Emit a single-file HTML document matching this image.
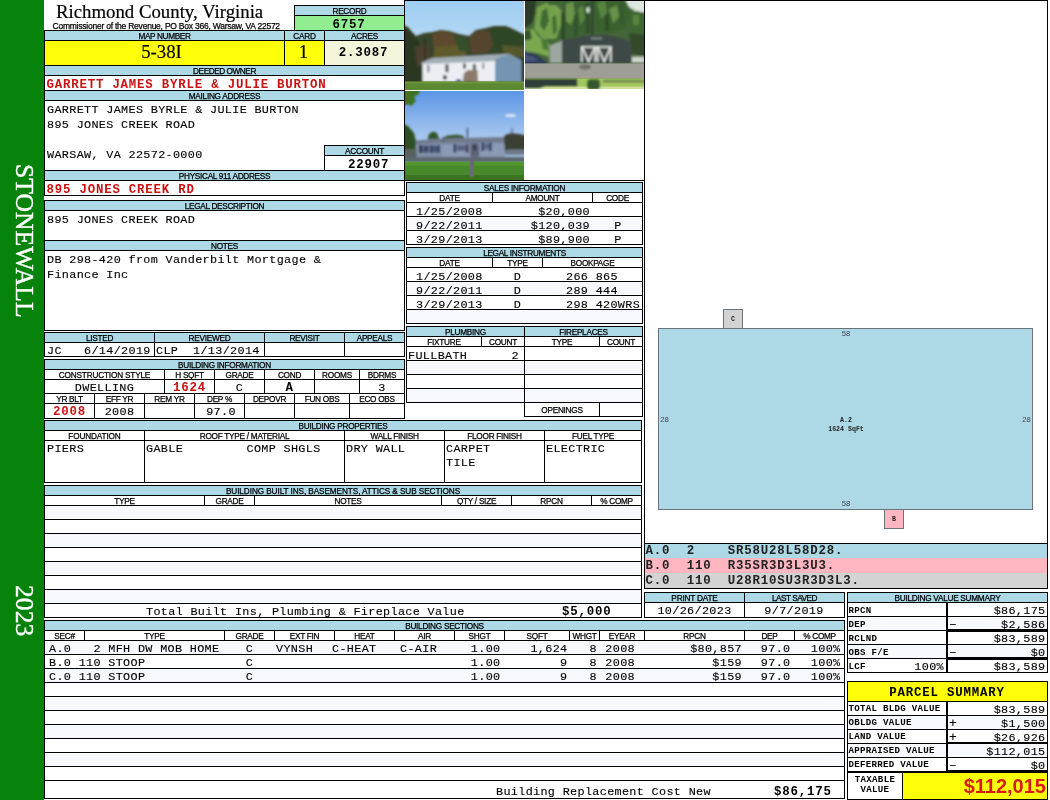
<!DOCTYPE html>
<html lang="en"><head><meta charset="utf-8"><title>Richmond County, Virginia - Property Record 6757</title>
<style>
html,body{margin:0;padding:0;background:#fff;}
#pg{position:relative;width:1050px;height:800px;overflow:hidden;background:#fff;}
.f{position:absolute;}
.r{position:absolute;box-sizing:border-box;border:1px solid #000;}
.t{position:absolute;white-space:pre;line-height:20px;color:#000;}
.m{font-family:"Liberation Mono",monospace;font-size:11.8px;letter-spacing:0.33px;color:#000;-webkit-text-stroke:0.12px #000;}
.mb{font-family:"Liberation Mono",monospace;font-size:12.4px;font-weight:bold;letter-spacing:0.8px;}
.ms{font-family:"Liberation Mono",monospace;font-size:9.1px;font-weight:bold;letter-spacing:0.3px;}
.l{font-family:"Liberation Sans",sans-serif;font-size:8.24px;letter-spacing:-0.27px;-webkit-text-stroke:0.25px #000;}
.s{font-family:"Liberation Serif",serif;font-size:18.8px;-webkit-text-stroke:0.2px #000;}
.red{color:#cc1111;}

#tx{position:absolute;left:0;top:0;width:1050px;height:800px;will-change:transform;}
.side{position:absolute;font-family:"Liberation Serif",serif;font-size:25.7px;color:#fff;-webkit-text-stroke:0.35px #fff;line-height:20px;white-space:pre;transform-origin:0 0;transform:rotate(90deg) translate(0,-20px);}
.sk{font-family:"Liberation Mono",monospace;font-size:6.6px;font-weight:bold;color:#222;}
.sd{font-family:"Liberation Sans",sans-serif;font-size:7.6px;color:#445;}
.big{font-family:"Liberation Sans",sans-serif;font-size:20px;font-weight:bold;color:#d81a1a;}
</style></head>
<body><div id="pg">
<div class="f" style="left:0px;top:0px;width:44px;height:800px;background:#07820a"></div>
<div class="r" style="left:294px;top:5px;width:111px;height:26px;"></div>
<div class="f" style="left:295px;top:6px;width:109px;height:9px;background:#add8e6"></div>
<div class="f" style="left:294px;top:15px;width:111px;height:1px;background:#000"></div>
<div class="f" style="left:295px;top:16px;width:109px;height:14px;background:#90ee90"></div>
<div class="r" style="left:44px;top:30px;width:361px;height:36px;"></div>
<div class="f" style="left:45px;top:31px;width:359px;height:9px;background:#add8e6"></div>
<div class="f" style="left:44px;top:40px;width:361px;height:1px;background:#000"></div>
<div class="f" style="left:45px;top:41px;width:279px;height:24px;background:#ffff0a"></div>
<div class="f" style="left:325px;top:41px;width:79px;height:24px;background:#f5f5dc"></div>
<div class="f" style="left:284px;top:30px;width:1px;height:36px;background:#000"></div>
<div class="f" style="left:324px;top:30px;width:1px;height:36px;background:#000"></div>
<div class="r" style="left:44px;top:65px;width:361px;height:26px;"></div>
<div class="f" style="left:45px;top:66px;width:359px;height:9px;background:#add8e6"></div>
<div class="f" style="left:44px;top:75px;width:361px;height:1px;background:#000"></div>
<div class="r" style="left:44px;top:90px;width:361px;height:81px;"></div>
<div class="f" style="left:45px;top:91px;width:359px;height:9px;background:#add8e6"></div>
<div class="f" style="left:44px;top:100px;width:361px;height:1px;background:#000"></div>
<div class="r" style="left:324px;top:145px;width:81px;height:26px;"></div>
<div class="f" style="left:325px;top:146px;width:79px;height:9px;background:#add8e6"></div>
<div class="f" style="left:324px;top:155px;width:81px;height:1px;background:#000"></div>
<div class="r" style="left:44px;top:170px;width:361px;height:26px;"></div>
<div class="f" style="left:45px;top:171px;width:359px;height:9px;background:#add8e6"></div>
<div class="f" style="left:44px;top:180px;width:361px;height:1px;background:#000"></div>
<div class="r" style="left:44px;top:200px;width:361px;height:41px;"></div>
<div class="f" style="left:45px;top:201px;width:359px;height:9px;background:#add8e6"></div>
<div class="f" style="left:44px;top:210px;width:361px;height:1px;background:#000"></div>
<div class="r" style="left:44px;top:240px;width:361px;height:91px;"></div>
<div class="f" style="left:45px;top:241px;width:359px;height:9px;background:#add8e6"></div>
<div class="f" style="left:44px;top:250px;width:361px;height:1px;background:#000"></div>
<div class="r" style="left:44px;top:332px;width:361px;height:25px;"></div>
<div class="f" style="left:45px;top:333px;width:359px;height:9px;background:#add8e6"></div>
<div class="f" style="left:44px;top:342px;width:361px;height:1px;background:#000"></div>
<div class="f" style="left:154px;top:332px;width:1px;height:25px;background:#000"></div>
<div class="f" style="left:264px;top:332px;width:1px;height:25px;background:#000"></div>
<div class="f" style="left:344px;top:332px;width:1px;height:25px;background:#000"></div>
<div class="r" style="left:44px;top:359px;width:361px;height:60px;"></div>
<div class="f" style="left:45px;top:360px;width:359px;height:9px;background:#add8e6"></div>
<div class="f" style="left:44px;top:369px;width:361px;height:1px;background:#000"></div>
<div class="f" style="left:44px;top:379px;width:361px;height:1px;background:#000"></div>
<div class="f" style="left:44px;top:393px;width:361px;height:1px;background:#000"></div>
<div class="f" style="left:44px;top:403px;width:361px;height:1px;background:#000"></div>
<div class="f" style="left:164px;top:369px;width:1px;height:25px;background:#000"></div>
<div class="f" style="left:214px;top:369px;width:1px;height:25px;background:#000"></div>
<div class="f" style="left:264px;top:369px;width:1px;height:25px;background:#000"></div>
<div class="f" style="left:314px;top:369px;width:1px;height:25px;background:#000"></div>
<div class="f" style="left:359px;top:369px;width:1px;height:25px;background:#000"></div>
<div class="f" style="left:94px;top:393px;width:1px;height:26px;background:#000"></div>
<div class="f" style="left:144px;top:393px;width:1px;height:26px;background:#000"></div>
<div class="f" style="left:194px;top:393px;width:1px;height:26px;background:#000"></div>
<div class="f" style="left:244px;top:393px;width:1px;height:26px;background:#000"></div>
<div class="f" style="left:294px;top:393px;width:1px;height:26px;background:#000"></div>
<div class="f" style="left:349px;top:393px;width:1px;height:26px;background:#000"></div>
<div class="r" style="left:44px;top:420px;width:598px;height:63px;"></div>
<div class="f" style="left:45px;top:421px;width:596px;height:9px;background:#add8e6"></div>
<div class="f" style="left:44px;top:430px;width:598px;height:1px;background:#000"></div>
<div class="f" style="left:44px;top:440px;width:598px;height:1px;background:#000"></div>
<div class="f" style="left:144px;top:430px;width:1px;height:53px;background:#000"></div>
<div class="f" style="left:344px;top:430px;width:1px;height:53px;background:#000"></div>
<div class="f" style="left:444px;top:430px;width:1px;height:53px;background:#000"></div>
<div class="f" style="left:544px;top:430px;width:1px;height:53px;background:#000"></div>
<div class="r" style="left:44px;top:485px;width:598px;height:133px;"></div>
<div class="f" style="left:45px;top:486px;width:596px;height:9px;background:#add8e6"></div>
<div class="f" style="left:44px;top:495px;width:598px;height:1px;background:#000"></div>
<div class="f" style="left:44px;top:505px;width:598px;height:1px;background:#000"></div>
<div class="f" style="left:204px;top:495px;width:1px;height:11px;background:#000"></div>
<div class="f" style="left:254px;top:495px;width:1px;height:11px;background:#000"></div>
<div class="f" style="left:441px;top:495px;width:1px;height:11px;background:#000"></div>
<div class="f" style="left:511px;top:495px;width:1px;height:11px;background:#000"></div>
<div class="f" style="left:591px;top:495px;width:1px;height:11px;background:#000"></div>
<div class="f" style="left:45px;top:506px;width:596px;height:13px;background:#f8f8ff"></div>
<div class="f" style="left:44px;top:519px;width:598px;height:1px;background:#000"></div>
<div class="f" style="left:44px;top:533px;width:598px;height:1px;background:#000"></div>
<div class="f" style="left:45px;top:534px;width:596px;height:13px;background:#f8f8ff"></div>
<div class="f" style="left:44px;top:547px;width:598px;height:1px;background:#000"></div>
<div class="f" style="left:44px;top:561px;width:598px;height:1px;background:#000"></div>
<div class="f" style="left:45px;top:562px;width:596px;height:13px;background:#f8f8ff"></div>
<div class="f" style="left:44px;top:575px;width:598px;height:1px;background:#000"></div>
<div class="f" style="left:44px;top:589px;width:598px;height:1px;background:#000"></div>
<div class="f" style="left:45px;top:590px;width:596px;height:13px;background:#f8f8ff"></div>
<div class="f" style="left:44px;top:603px;width:598px;height:1px;background:#000"></div>
<div class="r" style="left:44px;top:620px;width:801px;height:179px;"></div>
<div class="f" style="left:45px;top:621px;width:799px;height:9px;background:#add8e6"></div>
<div class="f" style="left:44px;top:630px;width:801px;height:1px;background:#000"></div>
<div class="f" style="left:44px;top:640px;width:801px;height:1px;background:#000"></div>
<div class="f" style="left:84px;top:630px;width:1px;height:11px;background:#000"></div>
<div class="f" style="left:224px;top:630px;width:1px;height:11px;background:#000"></div>
<div class="f" style="left:274px;top:630px;width:1px;height:11px;background:#000"></div>
<div class="f" style="left:334px;top:630px;width:1px;height:11px;background:#000"></div>
<div class="f" style="left:394px;top:630px;width:1px;height:11px;background:#000"></div>
<div class="f" style="left:454px;top:630px;width:1px;height:11px;background:#000"></div>
<div class="f" style="left:504px;top:630px;width:1px;height:11px;background:#000"></div>
<div class="f" style="left:569px;top:630px;width:1px;height:11px;background:#000"></div>
<div class="f" style="left:599px;top:630px;width:1px;height:11px;background:#000"></div>
<div class="f" style="left:644px;top:630px;width:1px;height:11px;background:#000"></div>
<div class="f" style="left:744px;top:630px;width:1px;height:11px;background:#000"></div>
<div class="f" style="left:794px;top:630px;width:1px;height:11px;background:#000"></div>
<div class="f" style="left:45px;top:641px;width:799px;height:13px;background:#f8f8ff"></div>
<div class="f" style="left:44px;top:654px;width:801px;height:1px;background:#000"></div>
<div class="f" style="left:44px;top:668px;width:801px;height:1px;background:#000"></div>
<div class="f" style="left:45px;top:669px;width:799px;height:13px;background:#f8f8ff"></div>
<div class="f" style="left:44px;top:682px;width:801px;height:1px;background:#000"></div>
<div class="f" style="left:44px;top:696px;width:801px;height:1px;background:#000"></div>
<div class="f" style="left:45px;top:697px;width:799px;height:13px;background:#f8f8ff"></div>
<div class="f" style="left:44px;top:710px;width:801px;height:1px;background:#000"></div>
<div class="f" style="left:44px;top:724px;width:801px;height:1px;background:#000"></div>
<div class="f" style="left:45px;top:725px;width:799px;height:13px;background:#f8f8ff"></div>
<div class="f" style="left:44px;top:738px;width:801px;height:1px;background:#000"></div>
<div class="f" style="left:44px;top:752px;width:801px;height:1px;background:#000"></div>
<div class="f" style="left:45px;top:753px;width:799px;height:13px;background:#f8f8ff"></div>
<div class="f" style="left:44px;top:766px;width:801px;height:1px;background:#000"></div>
<div class="f" style="left:44px;top:780px;width:801px;height:1px;background:#000"></div>
<div class="f" style="left:404px;top:0px;width:644px;height:1px;background:#000"></div>
<div class="f" style="left:404px;top:0px;width:1px;height:181px;background:#000"></div>
<div class="f" style="left:404px;top:180px;width:241px;height:1px;background:#000"></div>
<div class="f" style="left:644px;top:0px;width:1px;height:589px;background:#000"></div>
<div class="f" style="left:1047px;top:0px;width:1px;height:589px;background:#000"></div>

<svg class="f" style="left:405px;top:1px" width="119" height="89" viewBox="0 0 119 89">
<defs><linearGradient id="sk1" x1="0" y1="0" x2="0" y2="1"><stop offset="0" stop-color="#9fcdf1"/><stop offset="1" stop-color="#cde5f6"/></linearGradient>
<filter id="b1" x="-5%" y="-5%" width="110%" height="110%"><feGaussianBlur stdDeviation="0.9"/></filter></defs>
<rect width="119" height="89" fill="url(#sk1)"/>
<g filter="url(#b1)">
<path d="M-2 24 L3 26 L7 31 L11 35 L19 32 L28 31 L36 29 L44 30 L54 33 L64 35 L71 29 L81 27 L89 25 L101 25 L108 28 L114 31 L121 34 L121 84 L-2 84 Z" fill="#38452a"/>
<path d="M-2 26 L4 28 L10 36 L16 44 L18 82 L-2 82 Z" fill="#2b3823"/>
<path d="M10 46 L22 42 L26 60 L12 66 Z" fill="#4c4030"/>
<path d="M27 34 L37 30 L48 33 L52 44 L46 52 L30 52 Z" fill="#5e4a2e"/>
<path d="M30 46 L52 44 L62 52 L60 58 L28 58 Z" fill="#5e5a2c"/>
<path d="M50 34 L62 37 L64 50 L54 50 Z" fill="#35502a"/>
<path d="M64 36 L72 30 L84 30 L88 44 L82 52 L66 52 Z" fill="#54452d"/>
<path d="M86 27 L100 26 L112 31 L119 36 L119 52 L90 50 Z" fill="#2f4526"/>
<path d="M96 44 L119 46 L119 56 L100 54 Z" fill="#55592b"/>
<rect x="19.4" y="38" width="1.4" height="43" fill="#2a2a26"/>
<path d="M16.5 61.5 L27 57 L103.7 52.8 L116.7 59.4 L90 58.4 L90 60.5 L16.5 63.5 Z" fill="#a2adb5"/>
<path d="M17.5 63 L90 60 L90 81 L17.5 81 Z" fill="#eceef3"/>
<path d="M90 58.2 L103.7 53.2 L116.7 59.4 L116.7 81 L90 81 Z" fill="#7494b2"/>
<rect x="116.7" y="58" width="2.3" height="22" fill="#2c3626"/>
<rect x="22" y="64" width="2.6" height="7.2" fill="#8a909c"/><rect x="40" y="63.2" width="3.8" height="8" fill="#6a6f7a"/>
<rect x="58" y="62.6" width="3" height="5" fill="#55585c"/><rect x="67.8" y="63" width="3.2" height="6.4" fill="#5c5a58"/><rect x="77.6" y="62" width="1.5" height="5.6" fill="#55585c"/>
<path d="M57.5 81 L59 72 L63 69 L72.5 69 L73 81 Z" fill="#8b7a69"/>
<rect x="38" y="74.4" width="3.8" height="4" fill="#444a4c"/><rect x="51" y="78.4" width="5" height="2.4" fill="#2c4aa0"/>
</g>
<rect x="0" y="80.6" width="119" height="8.4" fill="#5c8831"/><rect x="0" y="80.6" width="119" height="2" fill="#6c9439"/>
</svg>
<svg class="f" style="left:525px;top:1px" width="119" height="88" viewBox="0 0 119 88">
<defs><filter id="b2" x="-5%" y="-5%" width="110%" height="110%"><feGaussianBlur stdDeviation="1.1"/></filter></defs>
<rect width="119" height="88" fill="#44663a"/>
<g filter="url(#b2)">
<path d="M-2 -2 H11 L10 12 L7 22 L-2 28 Z" fill="#2a3a28"/>
<path d="M12 6 L20 2 L30 3 L37 10 L36 24 L31 38 L18 38 L9 28 Z" fill="#74a04c"/>
<path d="M17 10 L22 7 L24 20 L19 30 L15 24 Z" fill="#3f6a30"/>
<path d="M27 16 L31 14 L32 30 L28 34 Z" fill="#426e31"/>
<path d="M22 -2 H36 L34 4 L24 4 Z" fill="#3c6230"/>
<path d="M37 -2 H66 L66 34 L52 36 L38 40 L36 24 Z" fill="#3c6034"/>
<path d="M41 3 L48 1 L50 14 L46 24 L41 20 Z" fill="#6a9448"/>
<path d="M53 8 L58 4 L60 18 L55 24 Z" fill="#588440"/>
<path d="M36 12 L40 12 L40 38 L36 40 Z" fill="#2f4c2a"/>
<path d="M49 14 L53 12 L53 34 L49 36 Z" fill="#33522c"/>
<path d="M60 2 L65 2 L65 32 L61 32 Z" fill="#31502c"/>
<rect x="66.4" y="-2" width="2" height="36" fill="#2c382e"/>
<path d="M69 -2 H104 L106 12 L100 28 L86 32 L70 32 Z" fill="#3a622e"/>
<path d="M72 2 L80 0 L82 12 L76 18 Z" fill="#588440"/>
<path d="M84 8 L92 4 L94 16 L88 22 Z" fill="#66924a"/>
<path d="M80 14 L84 12 L84 30 L80 30 Z" fill="#2f4e2a"/>
<path d="M94 2 L99 0 L99 22 L95 24 Z" fill="#365a2e"/>
<path d="M100 -2 H121 V12 L110 10 L104 6 Z" fill="#dde7de"/><ellipse cx="63" cy="9" rx="1.8" ry="3" fill="#cfdccf"/>
<path d="M104 9 L121 12 V34 L106 30 Z" fill="#3c6630"/>
<path d="M108 14 L114 14 L114 24 L108 24 Z" fill="#588440"/>
<path d="M104 32 L121 34 V56 L106 52 Z" fill="#304a2c"/>
<path d="M-2 28 L8 28 L14 36 L24 42 L24 56 L12 52 L-2 50 Z" fill="#7aa850"/>
<path d="M-2 30 L5 28 L7 38 L-2 40 Z" fill="#35562c"/>
<path d="M16 38 L22 38 L24 50 L18 48 Z" fill="#4a7a36"/>
<path d="M36.9 39.6 L59.2 34.7 L81.5 33.4 L101.3 38.4 L106.8 44.6 L106.8 62 L36.9 62 Z" fill="#3e4846"/>
<path d="M24.5 44.6 L36.9 39.6 L36.9 62 L24.5 62 Z" fill="#9da6a0"/>
<g fill="none" stroke="#f2f4f0" stroke-width="1.5"><path d="M56 46 H86.6"/><path d="M56.8 46 V61"/><path d="M85.8 46 V61"/><path d="M70.2 46 V61"/><path d="M72.6 46 V61"/><path d="M57.4 46.5 L63.6 60.6 L69.8 46.5"/><path d="M73 46.5 L79.2 60.6 L85.4 46.5"/></g>
<rect x="66" y="36.6" width="11" height="1.6" fill="#8a9490"/>
<rect x="106.8" y="55.7" width="13" height="6" fill="#cfd4cf"/>
<path d="M-2 50.4 L10 52.6 L21 60.4 L22 63 L-2 63 Z" fill="#2f3a58"/>
<path d="M-2 53 L8 55.4 L14 60 L-2 60 Z" fill="#4a5878"/>
</g>
<rect x="0" y="62.4" width="119" height="15.2" fill="#9e9e96"/>
<rect x="0" y="77.4" width="119" height="10.6" fill="#a2c660"/><rect x="0" y="85.6" width="119" height="2.4" fill="#cfe0a0"/>
<g filter="url(#b2)">
<ellipse cx="60" cy="66" rx="6" ry="2.4" fill="#6e6e68"/>
<path d="M-2 78 H52 V85 H20 L14 87 H-2 Z" fill="#2e3e37"/>
<rect x="62.3" y="78.4" width="12.4" height="10" rx="3" fill="#35552c"/>
<rect x="78" y="79.4" width="42" height="1.6" fill="#5c6a4a"/>
</g>
</svg>
<svg class="f" style="left:405px;top:91px" width="119" height="89" viewBox="0 0 119 89">
<defs><linearGradient id="sk3" x1="0" y1="0" x2="0" y2="1"><stop offset="0" stop-color="#5c96e6"/><stop offset="0.52" stop-color="#a7c7ef"/><stop offset="1" stop-color="#a7c7ef"/></linearGradient>
<filter id="b3" x="-5%" y="-5%" width="110%" height="110%"><feGaussianBlur stdDeviation="0.8"/></filter></defs>
<rect width="119" height="89" fill="url(#sk3)"/>
<g filter="url(#b3)">
<path d="M-2 -2 H15 L14 3 L9 6 L11 10 L6 15 L2 13 L-2 16 Z" fill="#3f7022"/>
<path d="M-2 33 L3 35 L9 42 L11 50 L11 61 L-2 62 Z" fill="#2e5020"/>
<path d="M22.5 48.5 L24 43 L28 40.5 L32 42 L34.5 48.5 Z" fill="#34542c"/>
<path d="M38 47 L42 44.5 L52 43.6 L59 45 L59 48.5 L38 48.5 Z" fill="#3a5a30"/>
<ellipse cx="105.5" cy="24.5" rx="5.5" ry="1.6" fill="#dfeaf8"/>
<rect x="61.8" y="36.8" width="1.3" height="10" fill="#3c4860"/><rect x="106.6" y="37.4" width="1" height="7" fill="#3c4860"/>
<path d="M10.9 49.5 L36 47.5 L98.8 46 L100 52.4 L10.9 53.6 Z" fill="#6f7a8e"/>
<path d="M10.9 53 L100 52 L100 66.4 L10.9 66.4 Z" fill="#8c9ab6"/>
<path d="M10.9 53 L37 52.6 L37 66.4 L10.9 66.4 Z" fill="#8290aa"/>
<rect x="37.5" y="45.5" width="2" height="6" fill="#5c6678"/>
<rect x="14" y="54" width="3.4" height="8" fill="#28324e"/><rect x="18.4" y="54.6" width="5.5" height="7" fill="#3c4868"/>
<rect x="25" y="54" width="2.6" height="8" fill="#28324e"/><rect x="28.2" y="54.6" width="4" height="7" fill="#46527a"/><rect x="32.6" y="54" width="2.2" height="8" fill="#28324e"/>
<rect x="48.6" y="53" width="2.4" height="8.6" fill="#28324e"/><rect x="51.6" y="54" width="8.6" height="6" fill="#56627e"/><rect x="60.8" y="53" width="2.6" height="8.6" fill="#28324e"/>
<rect x="65.4" y="52.6" width="8.8" height="13" fill="#5a6274"/><rect x="68" y="53.4" width="3" height="6" fill="#2f3850"/>
<rect x="76.5" y="51.8" width="2.4" height="8.4" fill="#28324e"/><rect x="79.4" y="52.6" width="4.6" height="6" fill="#5a6684"/><rect x="84.4" y="51.8" width="2.2" height="8.4" fill="#28324e"/>
<path d="M98.8 46 L101 43.5 L106 42.3 L114 43 L121 44.5 L121 61 L100 61 Z" fill="#3a4034"/>
<path d="M100 60 L104 58.6 L121 58.4 L121 64 L100 64 Z" fill="#707b8b"/>
<rect x="-2" y="58" width="13.5" height="9" fill="#56615c"/><rect x="-2" y="65.9" width="123" height="5.4" fill="#5c686e"/>
</g>
<rect x="0" y="70.8" width="119" height="18.2" fill="#47882a"/><rect x="0" y="70.8" width="119" height="4" fill="#52962e"/><rect x="0" y="84" width="119" height="5" fill="#3a7420"/>
<rect x="64.7" y="68.3" width="4.3" height="17.4" fill="#6a6680"/>
</svg>

<div class="r" style="left:406px;top:182px;width:237px;height:63px;"></div>
<div class="f" style="left:407px;top:183px;width:235px;height:9px;background:#add8e6"></div>
<div class="f" style="left:406px;top:192px;width:237px;height:1px;background:#000"></div>
<div class="f" style="left:406px;top:202px;width:237px;height:1px;background:#000"></div>
<div class="f" style="left:492px;top:192px;width:1px;height:11px;background:#000"></div>
<div class="f" style="left:592px;top:192px;width:1px;height:11px;background:#000"></div>
<div class="f" style="left:406px;top:216px;width:237px;height:1px;background:#000"></div>
<div class="f" style="left:406px;top:230px;width:237px;height:1px;background:#000"></div>
<div class="f" style="left:407px;top:217px;width:235px;height:13px;background:#f8f8ff"></div>
<div class="r" style="left:406px;top:247px;width:237px;height:77px;"></div>
<div class="f" style="left:407px;top:248px;width:235px;height:9px;background:#add8e6"></div>
<div class="f" style="left:406px;top:257px;width:237px;height:1px;background:#000"></div>
<div class="f" style="left:406px;top:267px;width:237px;height:1px;background:#000"></div>
<div class="f" style="left:492px;top:257px;width:1px;height:11px;background:#000"></div>
<div class="f" style="left:542px;top:257px;width:1px;height:11px;background:#000"></div>
<div class="f" style="left:406px;top:281px;width:237px;height:1px;background:#000"></div>
<div class="f" style="left:406px;top:295px;width:237px;height:1px;background:#000"></div>
<div class="f" style="left:406px;top:309px;width:237px;height:1px;background:#000"></div>
<div class="f" style="left:407px;top:282px;width:235px;height:13px;background:#f8f8ff"></div>
<div class="f" style="left:407px;top:310px;width:235px;height:13px;background:#f8f8ff"></div>
<div class="r" style="left:406px;top:326px;width:119px;height:77px;"></div>
<div class="r" style="left:524px;top:326px;width:119px;height:91px;"></div>
<div class="f" style="left:407px;top:327px;width:117px;height:9px;background:#add8e6"></div>
<div class="f" style="left:525px;top:327px;width:117px;height:9px;background:#add8e6"></div>
<div class="f" style="left:406px;top:336px;width:237px;height:1px;background:#000"></div>
<div class="f" style="left:406px;top:346px;width:237px;height:1px;background:#000"></div>
<div class="f" style="left:481px;top:336px;width:1px;height:11px;background:#000"></div>
<div class="f" style="left:599px;top:336px;width:1px;height:11px;background:#000"></div>
<div class="f" style="left:406px;top:360px;width:237px;height:1px;background:#000"></div>
<div class="f" style="left:406px;top:374px;width:237px;height:1px;background:#000"></div>
<div class="f" style="left:406px;top:388px;width:237px;height:1px;background:#000"></div>
<div class="f" style="left:524px;top:402px;width:119px;height:1px;background:#000"></div>
<div class="f" style="left:407px;top:361px;width:117px;height:13px;background:#f8f8ff"></div>
<div class="f" style="left:525px;top:361px;width:117px;height:13px;background:#f8f8ff"></div>
<div class="f" style="left:407px;top:389px;width:117px;height:13px;background:#f8f8ff"></div>
<div class="f" style="left:525px;top:389px;width:117px;height:13px;background:#f8f8ff"></div>
<div class="f" style="left:599px;top:402px;width:1px;height:15px;background:#000"></div>
<div class="r" style="left:658px;top:328px;width:375px;height:182px;background:#add8e6;border-color:#6a747c;"></div>
<div class="r" style="left:723px;top:309px;width:20px;height:20px;background:#d3d3d3;border-color:#6a747c;"></div>
<div class="r" style="left:884px;top:509px;width:20px;height:20px;background:#ffb6c1;border-color:#6a747c;"></div>
<div class="f" style="left:644px;top:543px;width:404px;height:1px;background:#000"></div>
<div class="f" style="left:644px;top:588px;width:404px;height:1px;background:#000"></div>
<div class="f" style="left:645px;top:544px;width:402px;height:14px;background:#add8e6"></div>
<div class="f" style="left:645px;top:558px;width:402px;height:15px;background:#ffb6c1"></div>
<div class="f" style="left:645px;top:573px;width:402px;height:15px;background:#d3d3d3"></div>
<div class="r" style="left:644px;top:592px;width:201px;height:26px;"></div>
<div class="f" style="left:645px;top:593px;width:199px;height:9px;background:#add8e6"></div>
<div class="f" style="left:644px;top:602px;width:201px;height:1px;background:#000"></div>
<div class="f" style="left:744px;top:592px;width:1px;height:26px;background:#000"></div>
<div class="r" style="left:847px;top:592px;width:201px;height:81px;"></div>
<div class="f" style="left:848px;top:593px;width:199px;height:9px;background:#add8e6"></div>
<div class="f" style="left:847px;top:602px;width:201px;height:1px;background:#000"></div>
<div class="f" style="left:946px;top:602px;width:2px;height:71px;background:#000"></div>
<div class="f" style="left:847px;top:616px;width:100px;height:1px;background:#000"></div>
<div class="f" style="left:947px;top:616px;width:101px;height:1px;background:#000"></div>
<div class="f" style="left:848px;top:617px;width:98px;height:13px;background:#f8f8ff"></div>
<div class="f" style="left:948px;top:617px;width:99px;height:13px;background:#f8f8ff"></div>
<div class="f" style="left:847px;top:630px;width:100px;height:1px;background:#000"></div>
<div class="f" style="left:947px;top:629px;width:101px;height:3px;background:#000"></div>
<div class="f" style="left:847px;top:644px;width:100px;height:1px;background:#000"></div>
<div class="f" style="left:947px;top:644px;width:101px;height:1px;background:#000"></div>
<div class="f" style="left:848px;top:645px;width:98px;height:13px;background:#f8f8ff"></div>
<div class="f" style="left:948px;top:645px;width:99px;height:13px;background:#f8f8ff"></div>
<div class="f" style="left:847px;top:658px;width:100px;height:1px;background:#000"></div>
<div class="f" style="left:947px;top:657px;width:101px;height:3px;background:#000"></div>
<div class="r" style="left:847px;top:681px;width:201px;height:119px;"></div>
<div class="f" style="left:848px;top:682px;width:199px;height:19px;background:#ffff0a"></div>
<div class="f" style="left:847px;top:701px;width:201px;height:1px;background:#000"></div>
<div class="f" style="left:946px;top:701px;width:2px;height:72px;background:#000"></div>
<div class="f" style="left:847px;top:715px;width:100px;height:1px;background:#000"></div>
<div class="f" style="left:947px;top:715px;width:101px;height:1px;background:#000"></div>
<div class="f" style="left:848px;top:716px;width:98px;height:13px;background:#f8f8ff"></div>
<div class="f" style="left:948px;top:716px;width:99px;height:13px;background:#f8f8ff"></div>
<div class="f" style="left:847px;top:729px;width:100px;height:1px;background:#000"></div>
<div class="f" style="left:947px;top:729px;width:101px;height:1px;background:#000"></div>
<div class="f" style="left:847px;top:743px;width:100px;height:1px;background:#000"></div>
<div class="f" style="left:947px;top:742px;width:101px;height:3px;background:#000"></div>
<div class="f" style="left:848px;top:744px;width:98px;height:13px;background:#f8f8ff"></div>
<div class="f" style="left:948px;top:744px;width:99px;height:13px;background:#f8f8ff"></div>
<div class="f" style="left:848px;top:744px;width:98px;height:13px;background:#f8f8ff"></div>
<div class="f" style="left:948px;top:744px;width:99px;height:13px;background:#f8f8ff"></div>
<div class="f" style="left:847px;top:757px;width:100px;height:1px;background:#000"></div>
<div class="f" style="left:947px;top:757px;width:101px;height:1px;background:#000"></div>
<div class="f" style="left:847px;top:771px;width:100px;height:1px;background:#000"></div>
<div class="f" style="left:947px;top:770px;width:101px;height:3px;background:#000"></div>
<div class="f" style="left:847px;top:772px;width:201px;height:1px;background:#000"></div>
<div class="f" style="left:903px;top:773px;width:144px;height:26px;background:#ffff0a"></div>
<div class="f" style="left:902px;top:772px;width:1px;height:28px;background:#000"></div>
<div id="tx">
<div class="side" style="left:13.8px;top:164px;">STONEWALL</div>
<div class="side" style="left:13.8px;top:585px;">2023</div>
<div class="t s" style="left:56px;top:2px;">Richmond County, Virginia</div>
<div class="t l" style="left:52.5px;top:16px;letter-spacing:-0.23px;font-size:8.5px;">Commissioner of the Revenue, PO Box 366, Warsaw, VA 22572</div>
<div class="t l" style="left:149.5px;top:2px;width:400px;text-align:center;">RECORD</div>
<div class="t mb" style="left:149px;top:15px;width:400px;text-align:center;">6757</div>
<div class="t l" style="left:-35.5px;top:27px;width:400px;text-align:center;letter-spacing:-0.36px;">MAP NUMBER</div>
<div class="t l" style="left:104.5px;top:27px;width:400px;text-align:center;">CARD</div>
<div class="t l" style="left:164.5px;top:27px;width:400px;text-align:center;">ACRES</div>
<div class="t s" style="left:-38.5px;top:42px;width:400px;text-align:center;">5-38I</div>
<div class="t s" style="left:103.5px;top:42px;width:400px;text-align:center;">1</div>
<div class="t mb" style="left:163.5px;top:43px;width:400px;text-align:center;">2.3087</div>
<div class="t l" style="left:24.5px;top:62px;width:400px;text-align:center;letter-spacing:-0.45px;">DEEDED OWNER</div>
<div class="t mb red" style="left:46.5px;top:75px;">GARRETT JAMES BYRLE &amp; JULIE BURTON</div>
<div class="t l" style="left:24.5px;top:87px;width:400px;text-align:center;">MAILING ADDRESS</div>
<div class="t m" style="left:47px;top:100px;">GARRETT JAMES BYRLE &amp; JULIE BURTON</div>
<div class="t m" style="left:47px;top:115px;">895 JONES CREEK ROAD</div>
<div class="t m" style="left:47px;top:145px;">WARSAW, VA 22572-0000</div>
<div class="t l" style="left:164.5px;top:142px;width:400px;text-align:center;">ACCOUNT</div>
<div class="t mb" style="left:164.5px;top:155px;width:400px;text-align:center;"> 22907</div>
<div class="t l" style="left:24.5px;top:167px;width:400px;text-align:center;letter-spacing:-0.31px;">PHYSICAL 911 ADDRESS</div>
<div class="t mb red" style="left:46.5px;top:180px;">895 JONES CREEK RD</div>
<div class="t l" style="left:24.5px;top:197px;width:400px;text-align:center;letter-spacing:-0.32px;">LEGAL DESCRIPTION</div>
<div class="t m" style="left:47px;top:210px;">895 JONES CREEK ROAD</div>
<div class="t l" style="left:24.5px;top:237px;width:400px;text-align:center;">NOTES</div>
<div class="t m" style="left:47px;top:250px;">DB 298-420 from Vanderbilt Mortgage &amp;</div>
<div class="t m" style="left:47px;top:265px;">Finance Inc</div>
<div class="t l" style="left:-100.5px;top:329px;width:400px;text-align:center;">LISTED</div>
<div class="t l" style="left:9.5px;top:329px;width:400px;text-align:center;">REVIEWED</div>
<div class="t l" style="left:104.5px;top:329px;width:400px;text-align:center;">REVISIT</div>
<div class="t l" style="left:174.5px;top:329px;width:400px;text-align:center;">APPEALS</div>
<div class="t m" style="left:47px;top:341px;">JC   6/14/2019</div>
<div class="t m" style="left:156px;top:341px;">CLP  1/13/2014</div>
<div class="t l" style="left:24.5px;top:356px;width:400px;text-align:center;">BUILDING INFORMATION</div>
<div class="t l" style="left:-95.5px;top:366px;width:400px;text-align:center;letter-spacing:-0.19px;">CONSTRUCTION STYLE</div>
<div class="t l" style="left:-10.5px;top:366px;width:400px;text-align:center;">H SQFT</div>
<div class="t l" style="left:39.5px;top:366px;width:400px;text-align:center;">GRADE</div>
<div class="t l" style="left:89.5px;top:366px;width:400px;text-align:center;">COND</div>
<div class="t l" style="left:137px;top:366px;width:400px;text-align:center;">ROOMS</div>
<div class="t l" style="left:182px;top:366px;width:400px;text-align:center;">BDRMS</div>
<div class="t m" style="left:-95.5px;top:378px;width:400px;text-align:center;">DWELLING</div>
<div class="t mb red" style="left:-10.5px;top:378px;width:400px;text-align:center;">1624</div>
<div class="t m" style="left:39.5px;top:378px;width:400px;text-align:center;">C</div>
<div class="t mb" style="left:89.5px;top:378px;width:400px;text-align:center;">A</div>
<div class="t m" style="left:182px;top:378px;width:400px;text-align:center;">3</div>
<div class="t l" style="left:-130.5px;top:390px;width:400px;text-align:center;">YR BLT</div>
<div class="t l" style="left:-80.5px;top:390px;width:400px;text-align:center;">EFF YR</div>
<div class="t l" style="left:-30.5px;top:390px;width:400px;text-align:center;">REM YR</div>
<div class="t l" style="left:19.5px;top:390px;width:400px;text-align:center;">DEP %</div>
<div class="t l" style="left:69.5px;top:390px;width:400px;text-align:center;">DEPOVR</div>
<div class="t l" style="left:122px;top:390px;width:400px;text-align:center;">FUN OBS</div>
<div class="t l" style="left:177px;top:390px;width:400px;text-align:center;">ECO OBS</div>
<div class="t mb red" style="left:-130.5px;top:402px;width:400px;text-align:center;">2008</div>
<div class="t m" style="left:-80.5px;top:402px;width:400px;text-align:center;">2008</div>
<div class="t m" style="left:21px;top:402px;width:400px;text-align:center;">97.0</div>
<div class="t l" style="left:143px;top:417px;width:400px;text-align:center;">BUILDING PROPERTIES</div>
<div class="t l" style="left:-105.5px;top:427px;width:400px;text-align:center;letter-spacing:-0.15px;">FOUNDATION</div>
<div class="t l" style="left:44.5px;top:427px;width:400px;text-align:center;">ROOF TYPE / MATERIAL</div>
<div class="t l" style="left:194.5px;top:427px;width:400px;text-align:center;">WALL FINISH</div>
<div class="t l" style="left:294.5px;top:427px;width:400px;text-align:center;">FLOOR FINISH</div>
<div class="t l" style="left:393px;top:427px;width:400px;text-align:center;">FUEL TYPE</div>
<div class="t m" style="left:47px;top:439px;">PIERS</div>
<div class="t m" style="left:146px;top:439px;">GABLE</div>
<div class="t m" style="left:246.5px;top:439px;">COMP SHGLS</div>
<div class="t m" style="left:346px;top:439px;">DRY WALL</div>
<div class="t m" style="left:446px;top:439px;">CARPET</div>
<div class="t m" style="left:446px;top:453px;">TILE</div>
<div class="t m" style="left:546px;top:439px;">ELECTRIC</div>
<div class="t l" style="left:143px;top:482px;width:400px;text-align:center;letter-spacing:-0.1px;">BUILDING BUILT INS, BASEMENTS, ATTICS &amp; SUB SECTIONS</div>
<div class="t l" style="left:-75.5px;top:492px;width:400px;text-align:center;">TYPE</div>
<div class="t l" style="left:29.5px;top:492px;width:400px;text-align:center;">GRADE</div>
<div class="t l" style="left:148px;top:492px;width:400px;text-align:center;">NOTES</div>
<div class="t l" style="left:276.5px;top:492px;width:400px;text-align:center;">QTY / SIZE</div>
<div class="t l" style="left:351.5px;top:492px;width:400px;text-align:center;">RPCN</div>
<div class="t l" style="left:416.5px;top:492px;width:400px;text-align:center;">% COMP</div>
<div class="t m" style="left:146px;top:602px;">Total Built Ins, Plumbing &amp; Fireplace Value</div>
<div class="t mb" style="left:562px;top:602px;">$5,000</div>
<div class="t l" style="left:244.5px;top:617px;width:400px;text-align:center;">BUILDING SECTIONS</div>
<div class="t l" style="left:-135.5px;top:627px;width:400px;text-align:center;">SEC#</div>
<div class="t l" style="left:-45.5px;top:627px;width:400px;text-align:center;">TYPE</div>
<div class="t l" style="left:49.5px;top:627px;width:400px;text-align:center;">GRADE</div>
<div class="t l" style="left:104.5px;top:627px;width:400px;text-align:center;">EXT FIN</div>
<div class="t l" style="left:164.5px;top:627px;width:400px;text-align:center;">HEAT</div>
<div class="t l" style="left:224.5px;top:627px;width:400px;text-align:center;">AIR</div>
<div class="t l" style="left:279.5px;top:627px;width:400px;text-align:center;">SHGT</div>
<div class="t l" style="left:337px;top:627px;width:400px;text-align:center;">SQFT</div>
<div class="t l" style="left:384.5px;top:627px;width:400px;text-align:center;">WHGT</div>
<div class="t l" style="left:422px;top:627px;width:400px;text-align:center;">EYEAR</div>
<div class="t l" style="left:494.5px;top:627px;width:400px;text-align:center;">RPCN</div>
<div class="t l" style="left:569.5px;top:627px;width:400px;text-align:center;">DEP</div>
<div class="t l" style="left:619.5px;top:627px;width:400px;text-align:center;">% COMP</div>
<div class="t m" style="left:49px;top:639px;">A.0   2 MFH DW MOB HOME</div>
<div class="t m" style="left:49.5px;top:639px;width:400px;text-align:center;">C</div>
<div class="t m" style="left:276px;top:639px;">VYNSH</div>
<div class="t m" style="left:332px;top:639px;">C-HEAT</div>
<div class="t m" style="left:400px;top:639px;">C-AIR</div>
<div class="t m" style="left:100.5px;top:639px;width:400px;text-align:right;">1.00</div>
<div class="t m" style="left:167.5px;top:639px;width:400px;text-align:right;">1,624</div>
<div class="t m" style="left:197px;top:639px;width:400px;text-align:right;">8</div>
<div class="t m" style="left:235px;top:639px;width:400px;text-align:right;">2008</div>
<div class="t m" style="left:342px;top:639px;width:400px;text-align:right;">$80,857</div>
<div class="t m" style="left:390.5px;top:639px;width:400px;text-align:right;">97.0</div>
<div class="t m" style="left:440.5px;top:639px;width:400px;text-align:right;">100%</div>
<div class="t m" style="left:49px;top:653px;">B.0 110 STOOP</div>
<div class="t m" style="left:49.5px;top:653px;width:400px;text-align:center;">C</div>
<div class="t m" style="left:100.5px;top:653px;width:400px;text-align:right;">1.00</div>
<div class="t m" style="left:167.5px;top:653px;width:400px;text-align:right;">9</div>
<div class="t m" style="left:197px;top:653px;width:400px;text-align:right;">8</div>
<div class="t m" style="left:235px;top:653px;width:400px;text-align:right;">2008</div>
<div class="t m" style="left:342px;top:653px;width:400px;text-align:right;">$159</div>
<div class="t m" style="left:390.5px;top:653px;width:400px;text-align:right;">97.0</div>
<div class="t m" style="left:440.5px;top:653px;width:400px;text-align:right;">100%</div>
<div class="t m" style="left:49px;top:667px;">C.0 110 STOOP</div>
<div class="t m" style="left:49.5px;top:667px;width:400px;text-align:center;">C</div>
<div class="t m" style="left:100.5px;top:667px;width:400px;text-align:right;">1.00</div>
<div class="t m" style="left:167.5px;top:667px;width:400px;text-align:right;">9</div>
<div class="t m" style="left:197px;top:667px;width:400px;text-align:right;">8</div>
<div class="t m" style="left:235px;top:667px;width:400px;text-align:right;">2008</div>
<div class="t m" style="left:342px;top:667px;width:400px;text-align:right;">$159</div>
<div class="t m" style="left:390.5px;top:667px;width:400px;text-align:right;">97.0</div>
<div class="t m" style="left:440.5px;top:667px;width:400px;text-align:right;">100%</div>
<div class="t m" style="left:496px;top:782px;">Building Replacement Cost New</div>
<div class="t mb" style="left:774px;top:782px;">$86,175</div>
<div class="t l" style="left:324.5px;top:179px;width:400px;text-align:center;">SALES INFORMATION</div>
<div class="t l" style="left:249.5px;top:189px;width:400px;text-align:center;">DATE</div>
<div class="t l" style="left:342.5px;top:189px;width:400px;text-align:center;">AMOUNT</div>
<div class="t l" style="left:417.5px;top:189px;width:400px;text-align:center;">CODE</div>
<div class="t m" style="left:416px;top:202px;">1/25/2008</div>
<div class="t m" style="left:190px;top:202px;width:400px;text-align:right;">$20,000</div>
<div class="t m" style="left:416px;top:216px;">9/22/2011</div>
<div class="t m" style="left:190px;top:216px;width:400px;text-align:right;">$120,039</div>
<div class="t m" style="left:418px;top:216px;width:400px;text-align:center;">P</div>
<div class="t m" style="left:416px;top:230px;">3/29/2013</div>
<div class="t m" style="left:190px;top:230px;width:400px;text-align:right;">$89,900</div>
<div class="t m" style="left:418px;top:230px;width:400px;text-align:center;">P</div>
<div class="t l" style="left:324.5px;top:244px;width:400px;text-align:center;letter-spacing:-0.31px;">LEGAL INSTRUMENTS</div>
<div class="t l" style="left:249.5px;top:254px;width:400px;text-align:center;">DATE</div>
<div class="t l" style="left:317.5px;top:254px;width:400px;text-align:center;">TYPE</div>
<div class="t l" style="left:392.5px;top:254px;width:400px;text-align:center;">BOOKPAGE</div>
<div class="t m" style="left:416px;top:267px;">1/25/2008</div>
<div class="t m" style="left:317.5px;top:267px;width:400px;text-align:center;">D</div>
<div class="t m" style="left:566px;top:267px;">266 865</div>
<div class="t m" style="left:416px;top:281px;">9/22/2011</div>
<div class="t m" style="left:317.5px;top:281px;width:400px;text-align:center;">D</div>
<div class="t m" style="left:566px;top:281px;">289 444</div>
<div class="t m" style="left:416px;top:295px;">3/29/2013</div>
<div class="t m" style="left:317.5px;top:295px;width:400px;text-align:center;">D</div>
<div class="t m" style="left:566px;top:295px;">298 420WRS</div>
<div class="t l" style="left:265.5px;top:323px;width:400px;text-align:center;">PLUMBING</div>
<div class="t l" style="left:383.5px;top:323px;width:400px;text-align:center;">FIREPLACES</div>
<div class="t l" style="left:244px;top:333px;width:400px;text-align:center;">FIXTURE</div>
<div class="t l" style="left:303px;top:333px;width:400px;text-align:center;">COUNT</div>
<div class="t l" style="left:362px;top:333px;width:400px;text-align:center;">TYPE</div>
<div class="t l" style="left:421px;top:333px;width:400px;text-align:center;">COUNT</div>
<div class="t l" style="left:362px;top:401px;width:400px;text-align:center;">OPENINGS</div>
<div class="t m" style="left:408px;top:346px;">FULLBATH</div>
<div class="t m" style="left:119px;top:346px;width:400px;text-align:right;">2</div>
<div class="t sk" style="left:533px;top:310px;width:400px;text-align:center;">C</div>
<div class="t sk" style="left:694px;top:510px;width:400px;text-align:center;">B</div>
<div class="t sd" style="left:646px;top:324px;width:400px;text-align:center;">58</div>
<div class="t sd" style="left:646px;top:494px;width:400px;text-align:center;">58</div>
<div class="t sd" style="left:464.5px;top:410px;width:400px;text-align:center;">28</div>
<div class="t sd" style="left:826.5px;top:410px;width:400px;text-align:center;">28</div>
<div class="t sk" style="left:646px;top:411px;width:400px;text-align:center;">A.2</div>
<div class="t sk" style="left:646px;top:420px;width:400px;text-align:center;">1624 SqFt</div>
<div class="t mb" style="left:645.5px;top:541px;color:#222;">A.0  2    SR58U28L58D28.</div>
<div class="t mb" style="left:645.5px;top:556px;color:#222;">B.0  110  R35SR3D3L3U3.</div>
<div class="t mb" style="left:645.5px;top:571px;color:#222;">C.0  110  U28R10SU3R3D3L3.</div>
<div class="t l" style="left:494.5px;top:589px;width:400px;text-align:center;letter-spacing:-0.19px;">PRINT DATE</div>
<div class="t l" style="left:594.5px;top:589px;width:400px;text-align:center;letter-spacing:-0.5px;">LAST SAVED</div>
<div class="t m" style="left:494.5px;top:601px;width:400px;text-align:center;">10/26/2023</div>
<div class="t m" style="left:594px;top:601px;width:400px;text-align:center;">9/7/2019</div>
<div class="t l" style="left:747.5px;top:589px;width:400px;text-align:center;">BUILDING VALUE SUMMARY</div>
<div class="t ms" style="left:848.5px;top:601px;">RPCN</div>
<div class="t m" style="left:645.5px;top:601px;width:400px;text-align:right;">$86,175</div>
<div class="t ms" style="left:848.5px;top:615px;">DEP</div>
<div class="t m" style="left:645.5px;top:615px;width:400px;text-align:right;">$2,586</div>
<div class="t m" style="left:949px;top:615px;font-size:13px;letter-spacing:0;">–</div>
<div class="t ms" style="left:848.5px;top:629px;">RCLND</div>
<div class="t m" style="left:645.5px;top:629px;width:400px;text-align:right;">$83,589</div>
<div class="t ms" style="left:848.5px;top:643px;">OBS F/E</div>
<div class="t m" style="left:645.5px;top:643px;width:400px;text-align:right;">$0</div>
<div class="t m" style="left:949px;top:643px;font-size:13px;letter-spacing:0;">–</div>
<div class="t ms" style="left:848.5px;top:657px;">LCF</div>
<div class="t m" style="left:645.5px;top:657px;width:400px;text-align:right;">$83,589</div>
<div class="t m" style="left:544px;top:657px;width:400px;text-align:right;">100%</div>
<div class="t mb" style="left:747px;top:683px;width:400px;text-align:center;">PARCEL SUMMARY</div>
<div class="t ms" style="left:848.5px;top:699px;">TOTAL BLDG VALUE</div>
<div class="t m" style="left:645.5px;top:700px;width:400px;text-align:right;">$83,589</div>
<div class="t ms" style="left:848.5px;top:713px;">OBLDG VALUE</div>
<div class="t m" style="left:645.5px;top:714px;width:400px;text-align:right;">$1,500</div>
<div class="t m" style="left:949px;top:714px;font-size:13px;letter-spacing:0;">+</div>
<div class="t ms" style="left:848.5px;top:727px;">LAND VALUE</div>
<div class="t m" style="left:645.5px;top:728px;width:400px;text-align:right;">$26,926</div>
<div class="t m" style="left:949px;top:728px;font-size:13px;letter-spacing:0;">+</div>
<div class="t ms" style="left:848.5px;top:741px;">APPRAISED VALUE</div>
<div class="t m" style="left:645.5px;top:742px;width:400px;text-align:right;">$112,015</div>
<div class="t ms" style="left:848.5px;top:755px;">DEFERRED VALUE</div>
<div class="t m" style="left:645.5px;top:756px;width:400px;text-align:right;">$0</div>
<div class="t m" style="left:949px;top:756px;font-size:13px;letter-spacing:0;">–</div>
<div class="t ms" style="left:675px;top:770px;width:400px;text-align:center;">TAXABLE</div>
<div class="t ms" style="left:675px;top:780px;width:400px;text-align:center;">VALUE</div>
<div class="t big" style="left:646px;top:776px;width:400px;text-align:right;">$112,015</div>
</div>
</div></body></html>
